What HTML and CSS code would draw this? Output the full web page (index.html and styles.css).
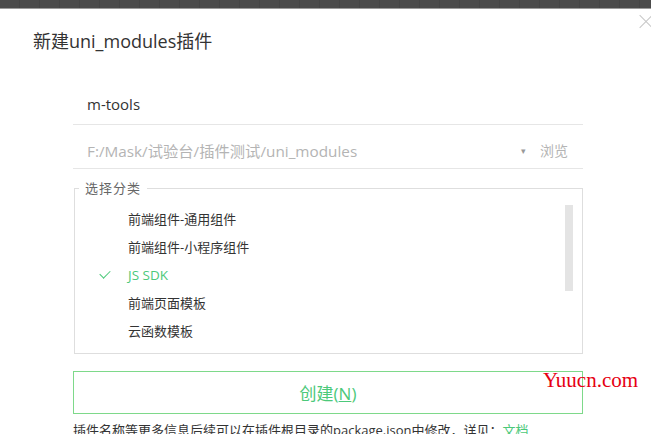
FILE: index.html
```html
<!DOCTYPE html>
<html lang="zh-CN">
<head>
    <meta charset="UTF-8">
    <title>新建uni_modules插件</title>
    <link rel="stylesheet" href="styles.css">
</head>
<body>
    <div class="topbar"></div>
    <div class="dialog">
        <span class="close"></span>
        <h1 class="title">新建uni_modules插件</h1>

        <div class="form">
            <div class="field name-field">m-tools</div>
            <div class="field path-field">
                <span class="path">F:/Mask/试验台/插件测试/uni_modules</span>
                <span class="caret">▾</span>
                <span class="browse">浏览</span>
            </div>

            <fieldset class="category">
                <legend>选择分类</legend>
                <div class="list-wrap">
                    <ul class="list">
                        <li>前端组件-通用组件</li>
                        <li>前端组件-小程序组件</li>
                        <li class="selected">JS SDK</li>
                        <li>前端页面模板</li>
                        <li>云函数模板</li>
                    </ul>
                    <div class="scrollbar"><div class="thumb"></div></div>
                </div>
            </fieldset>

            <button class="create">创建(<u>N</u>)</button>

            <p class="hint">插件名称等更多信息后续可以在插件根目录的package.json中修改，详见：<a href="#">文档</a></p>
        </div>
    </div>
    <div class="watermark">Yuucn.com</div>
</body>
</html>
```

FILE: styles.css
```css
body {
    margin: 0;
    background: #fff;
    font-family: "Open Sans", "Noto Sans CJK SC", sans-serif;
    color: #333;
    overflow: hidden;
}

.topbar {
    height: 8px;
    background-color: #4b4b4b;
    background-image: repeating-linear-gradient(90deg, transparent 0, transparent 19px, #454545 19px, #454545 20px);
    border-bottom: 1px solid #9a9a9a;
}

.dialog {
    position: relative;
    height: 425px;
}

.close {
    position: absolute;
    top: 5px;
    right: -2px;
    width: 16px;
    height: 16px;
}

.close::before,
.close::after {
    content: "";
    position: absolute;
    left: 0;
    top: 7px;
    width: 18px;
    height: 1px;
    background: #c8c8c8;
    transform: rotate(45deg);
}

.close::after {
    transform: rotate(-45deg);
}

.title {
    margin: 0;
    padding: 20px 0 0 33px;
    font-size: 18px;
    font-weight: normal;
    line-height: 24px;
    color: #333;
}

.form {
    width: 510px;
    margin: 0 0 0 73px;
    padding-top: 31px;
}

.field {
    border-bottom: 1px solid #e6e6e6;
    padding-left: 14px;
    font-size: 15px;
}

.name-field {
    height: 40px;
    line-height: 40px;
    color: #333;
}

.path-field {
    display: flex;
    align-items: center;
    height: 44px;
    padding-top: 7px;
    box-sizing: border-box;
    color: #b4b4b4;
    font-size: 15.3px;
}

.path {
    flex: 1;
}

.caret {
    font-size: 9px;
    color: #999;
    margin-right: 14px;
}

.browse {
    font-size: 14px;
    margin-right: 15px;
}

.category {
    margin: 10px 0 0 1px;
    padding: 0 9px 8px 0;
    border: 1px solid #dedede;
}

.category legend {
    margin-left: 4px;
    padding: 0 6px;
    font-size: 13px;
    line-height: 18px;
    color: #666;
    letter-spacing: 1px;
}

.list-wrap {
    display: flex;
    padding-top: 8px;
}

.list {
    flex: 1;
    list-style: none;
    margin: 0;
    padding: 0;
}

.list li {
    position: relative;
    height: 28px;
    line-height: 28px;
    padding-left: 53px;
    font-size: 13px;
    color: #333;
}

.list li.selected {
    color: #4cc97a;
    font-size: 13.5px;
}

.list li.selected::before {
    content: "";
    position: absolute;
    left: 25px;
    top: 9px;
    width: 9px;
    height: 5px;
    border-left: 1.5px solid #4cc97a;
    border-bottom: 1.5px solid #4cc97a;
    transform: rotate(-45deg);
}

.scrollbar {
    width: 8px;
}

.thumb {
    height: 86px;
    background: #e4e4e4;
}

.create {
    display: block;
    width: 100%;
    height: 43px;
    margin-top: 17px;
    border: 1px solid #7ed98a;
    background: #fff;
    color: #4cc97a;
    font-family: "Open Sans", "Noto Sans CJK SC", sans-serif;
    font-size: 17px;
}

.hint {
    margin: 7px 0 0;
    font-size: 13px;
    line-height: 18px;
    color: #333;
    white-space: nowrap;
}

.hint a {
    color: #4cc97a;
    text-decoration: none;
}

.watermark {
    position: absolute;
    left: 543px;
    top: 368px;
    font-family: "Liberation Serif", serif;
    font-size: 21px;
    color: #e60012;
}
```
